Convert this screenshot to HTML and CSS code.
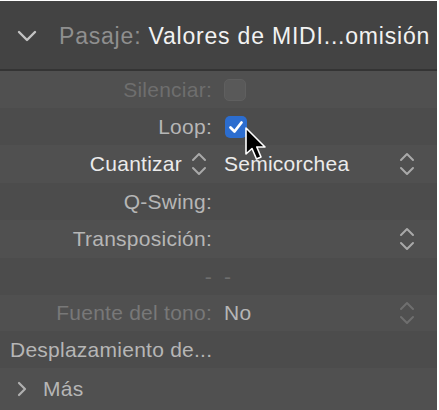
FILE: index.html
```html
<!DOCTYPE html>
<html>
<head>
<meta charset="utf-8">
<link rel="stylesheet" href="styles.css">
</head>
<body>
<div class="panel">
  <div class="header">
    <svg class="hchev" width="20" height="12" viewBox="0 0 20 12"><path d="M2 2 L10 10 L18 2" fill="none" stroke="#c4c4c4" stroke-width="2.4" stroke-linecap="round" stroke-linejoin="round"/></svg>
    <span class="htitle"><span class="hkey">Pasaje:</span> Valores de MIDI...omisión</span>
  </div>
  <div class="rows">
    <div class="row r1 a">
      <div class="label dim">Silenciar:</div>
      <div class="value"><span class="cb off"></span></div>
    </div>
    <div class="row r2 b">
      <div class="label">Loop:</div>
      <div class="value">
        <span class="cb on"><svg width="22" height="22" viewBox="0 0 22 22"><path d="M5.5 11.5 L9.5 15.5 L16.5 6.5" fill="none" stroke="#fff" stroke-width="2.8" stroke-linecap="round" stroke-linejoin="round"/></svg></span>
        <svg class="cursor" width="30" height="36" viewBox="0 0 30 36"><path d="M2 1 L2 27 L8 21.5 L12.5 32 L17 30 L12.8 20 L21 20 Z" fill="#000" stroke="#fff" stroke-width="1.6" stroke-linejoin="round"/></svg>
      </div>
    </div>
    <div class="row r3 a">
      <div class="label bright">Cuantizar <svg class="step inl" width="16" height="26" viewBox="0 0 16 26"><path d="M2 9 L8 3 L14 9 M2 17 L8 23 L14 17" fill="none" stroke="#a9a9a9" stroke-width="2" stroke-linecap="round" stroke-linejoin="round"/></svg></div>
      <div class="value bright">Semicorchea</div>
      <svg class="step" width="16" height="26" viewBox="0 0 16 26"><path d="M2 9 L8 3 L14 9 M2 17 L8 23 L14 17" fill="none" stroke="#a9a9a9" stroke-width="2" stroke-linecap="round" stroke-linejoin="round"/></svg>
    </div>
    <div class="row r4 b">
      <div class="label">Q-Swing:</div>
      <div class="value"></div>
    </div>
    <div class="row r5 a">
      <div class="label">Transposición:</div>
      <div class="value"></div>
      <svg class="step" width="16" height="26" viewBox="0 0 16 26"><path d="M2 9 L8 3 L14 9 M2 17 L8 23 L14 17" fill="none" stroke="#a9a9a9" stroke-width="2" stroke-linecap="round" stroke-linejoin="round"/></svg>
    </div>
    <div class="row r6 b">
      <div class="label dim">-</div>
      <div class="value dim">-</div>
    </div>
    <div class="row r7 a">
      <div class="label dim2">Fuente del tono:</div>
      <div class="value">No</div>
      <svg class="step" width="16" height="26" viewBox="0 0 16 26"><path d="M2 9 L8 3 L14 9 M2 17 L8 23 L14 17" fill="none" stroke="#6f6f6f" stroke-width="2" stroke-linecap="round" stroke-linejoin="round"/></svg>
    </div>
    <div class="row r8 b left">
      <div class="ltext">Desplazamiento de...</div>
    </div>
    <div class="row r9 a left">
      <svg class="mchev" width="10" height="16" viewBox="0 0 10 16"><path d="M2 2 L8 8 L2 14" fill="none" stroke="#b0b0b0" stroke-width="2.2" stroke-linecap="round" stroke-linejoin="round"/></svg>
      <div class="ltext">Más</div>
    </div>
  </div>
</div>
</body>
</html>
```

FILE: styles.css
```css
html, body {
  margin: 0;
  padding: 0;
  background: #ffffff;
}
body {
  width: 439px;
  height: 410px;
  overflow: hidden;
  font-family: "Liberation Sans", Arial, sans-serif;
}
.panel {
  width: 437px;
  height: 409px;
  margin-top: 1px;
  background: #4e4e4e;
  overflow: hidden;
}
.header {
  background: #434343;
  border-bottom: 2px solid #343434;
  display: flex;
  align-items: center;
  padding-left: 17px;
  padding-top: 2px;
  box-sizing: border-box;
  height: 70px;
}
.hchev {
  display: block;
  margin-right: 22px;
}
.htitle {
  font-size: 23px;
  color: #f2f2f2;
  white-space: nowrap;
  letter-spacing: 0.8px;
}
.hkey {
  color: #8f8f8f;
}
.rows {
  display: flex;
  flex-direction: column;
}
.row {
  display: flex;
  align-items: center;
  font-size: 21px;
  letter-spacing: 0.25px;
  color: #b6b6b6;
  padding-right: 22px;
  position: relative;
}
.row.a { background: #505050; }
.row.b { background: #4c4c4c; }
.r1 { height: 37px; }
.r2 { height: 37px; }
.r3 { height: 38px; }
.r4 { height: 37px; }
.r5 { height: 38px; }
.r6 { height: 37px; }
.r7 { height: 36px; }
.r8 { height: 37px; }
.r9 { height: 42px; }
.label {
  width: 212px;
  flex: none;
  box-sizing: border-box;
  text-align: right;
  white-space: nowrap;
  display: flex;
  justify-content: flex-end;
  align-items: center;
}
.value {
  flex: 1;
  margin-left: 12px;
  display: flex;
  align-items: center;
  white-space: nowrap;
}
.dim { color: #6e6e6e; }
.dim2 { color: #787878; }
.bright { color: #ebebeb; }
.label.bright { padding-right: 5px; }
.step.inl { margin-left: 9px; }
.step { display: block; flex: none; }
.cb {
  width: 22px;
  height: 22px;
  border-radius: 5px;
  box-sizing: border-box;
  display: block;
}
.cb.off {
  background: #595959;
  border: 1px solid #5f5f5f;
}
.cb.on {
  background: #2c6dcf;
  margin-left: 1px;
}
.cb svg { display: block; }
.cursor {
  position: absolute;
  left: 244px;
  top: 19px;
  z-index: 2;
}
.left { padding-left: 10px; }
.ltext { white-space: nowrap; }
.mchev { display: block; margin-left: 7px; margin-right: 16px; }
```
